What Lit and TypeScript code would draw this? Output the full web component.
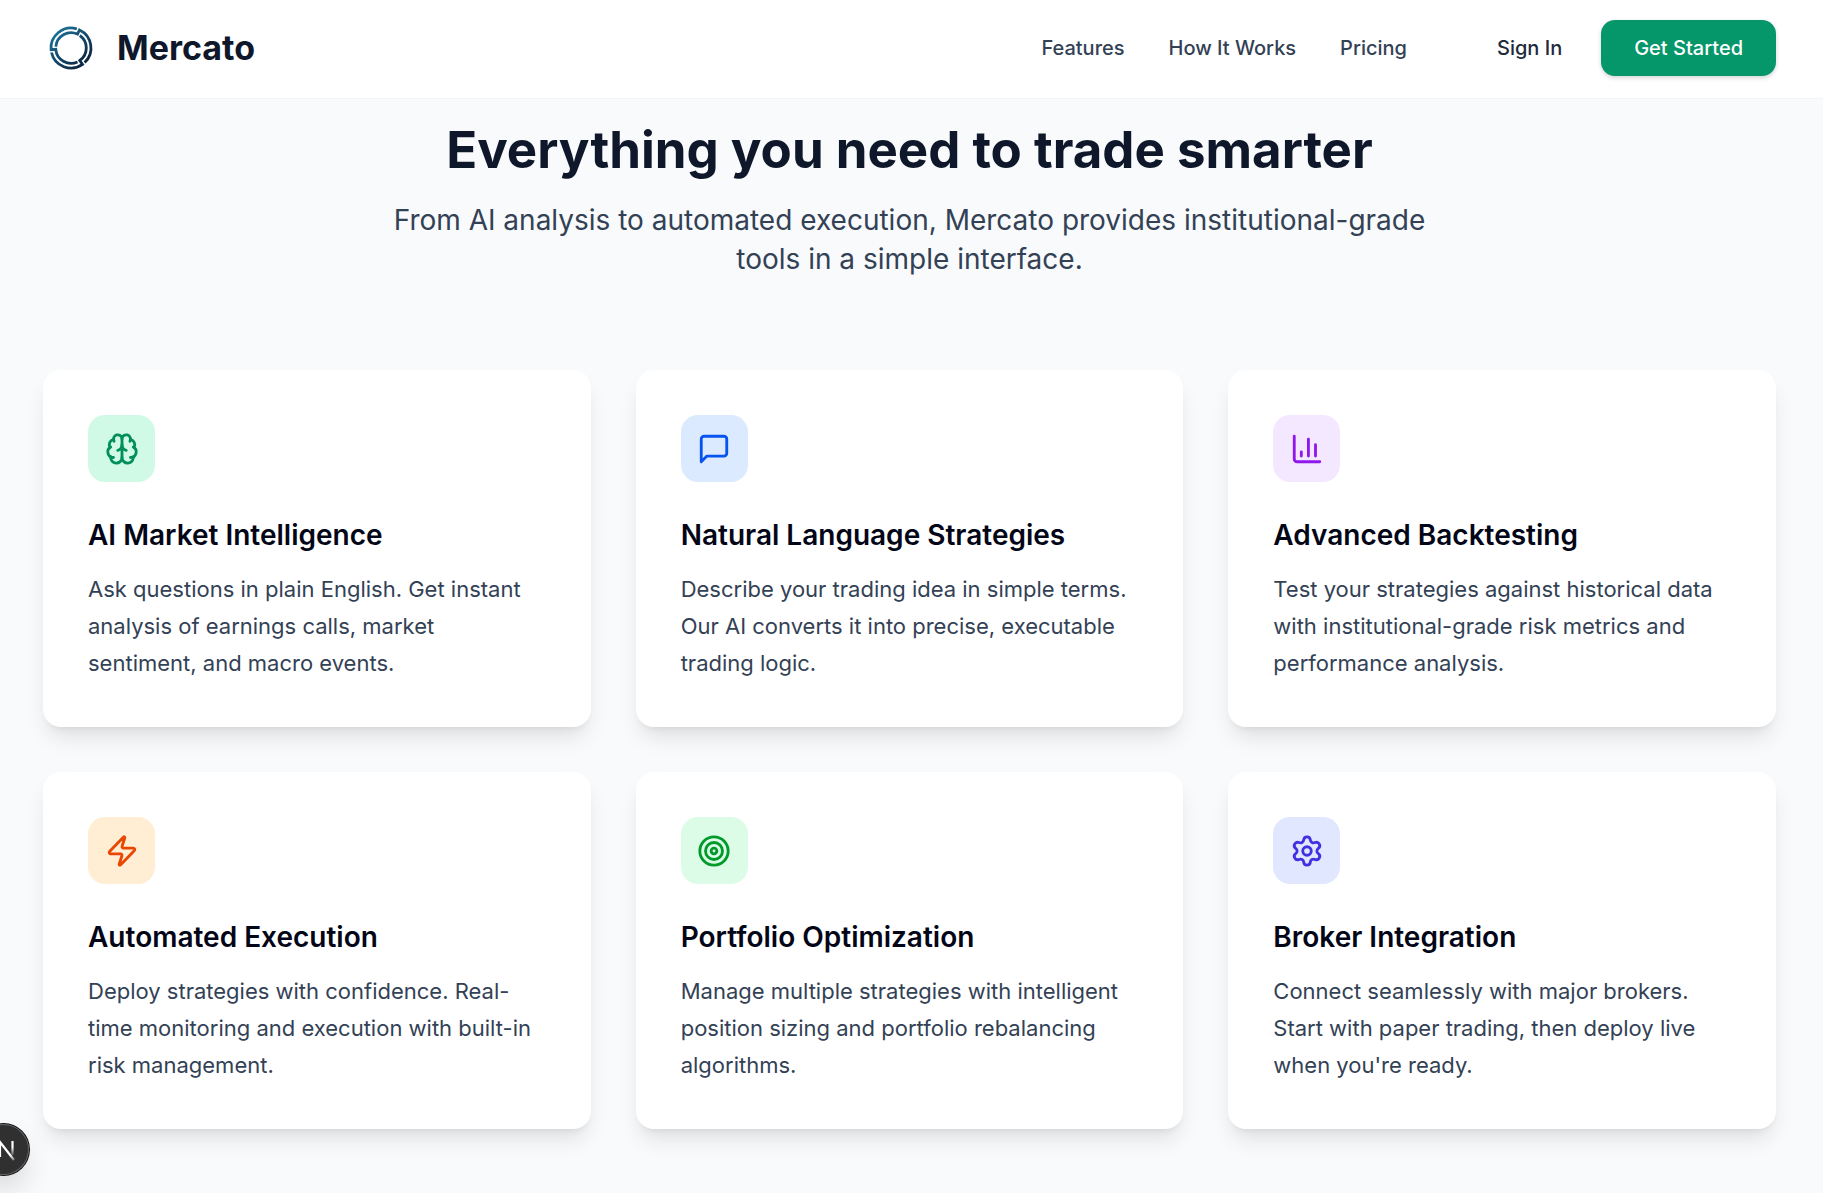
import { LitElement, html, css, svg } from "lit";
import { customElement } from "lit/decorators.js";

const icons = {
  brain: svg`<path d="M12 18V5"/><path d="M15 13a4.17 4.17 0 0 1-3-4 4.17 4.17 0 0 1-3 4"/><path d="M17.598 6.5A3 3 0 1 0 12 5a3 3 0 1 0-5.598 1.5"/><path d="M17.997 5.125a4 4 0 0 1 2.526 5.77"/><path d="M18 18a4 4 0 0 0 2-7.464"/><path d="M19.967 17.483A4 4 0 1 1 12 18a4 4 0 1 1-7.967-.517"/><path d="M6 18a4 4 0 0 1-2-7.464"/><path d="M6.003 5.125a4 4 0 0 0-2.526 5.77"/>`,
  message: svg`<path d="M21 15a2 2 0 0 1-2 2H7l-4 4V5a2 2 0 0 1 2-2h14a2 2 0 0 1 2 2z"/>`,
  chart: svg`<path d="M3 3v16a2 2 0 0 0 2 2h16"/><path d="M18 17V9"/><path d="M13 17V5"/><path d="M8 17v-3"/>`,
  zap: svg`<path d="M4 14a1 1 0 0 1-.78-1.63l9.9-10.2a.5.5 0 0 1 .86.46l-1.92 6.02A1 1 0 0 0 13 10h7a1 1 0 0 1 .78 1.63l-9.9 10.2a.5.5 0 0 1-.86-.46l1.92-6.02A1 1 0 0 0 11 14z"/>`,
  target: svg`<circle cx="12" cy="12" r="10"/><circle cx="12" cy="12" r="6"/><circle cx="12" cy="12" r="2"/>`,
  gear: svg`<path d="M9.671 4.136a2.34 2.34 0 0 1 4.659 0 2.34 2.34 0 0 0 3.319 1.915 2.34 2.34 0 0 1 2.33 4.033 2.34 2.34 0 0 0 0 3.831 2.34 2.34 0 0 1-2.33 4.033 2.34 2.34 0 0 0-3.319 1.915 2.34 2.34 0 0 1-4.659 0 2.34 2.34 0 0 0-3.32-1.915 2.34 2.34 0 0 1-2.33-4.033 2.34 2.34 0 0 0 0-3.831A2.34 2.34 0 0 1 6.35 6.051a2.34 2.34 0 0 0 3.319-1.915"/><circle cx="12" cy="12" r="3"/>`,
};

const features = [
  { tone: "emerald", icon: icons.brain, title: "AI Market Intelligence", text: "Ask questions in plain English. Get instant analysis of earnings calls, market sentiment, and macro events." },
  { tone: "blue", icon: icons.message, title: "Natural Language Strategies", text: "Describe your trading idea in simple terms. Our AI converts it into precise, executable trading logic." },
  { tone: "purple", icon: icons.chart, title: "Advanced Backtesting", text: "Test your strategies against historical data with institutional-grade risk metrics and performance analysis." },
  { tone: "orange", icon: icons.zap, title: "Automated Execution", text: "Deploy strategies with confidence. Real-time monitoring and execution with built-in risk management." },
  { tone: "green", icon: icons.target, title: "Portfolio Optimization", text: "Manage multiple strategies with intelligent position sizing and portfolio rebalancing algorithms." },
  { tone: "indigo", icon: icons.gear, title: "Broker Integration", text: "Connect seamlessly with major brokers. Start with paper trading, then deploy live when you're ready." },
];

@customElement("app-root")
export class AppRoot extends LitElement {
  static styles = css`
    :host {
      display: block;
      min-height: 100vh;
      background: #f8fafc;
      font-family: Inter, "Liberation Sans", sans-serif;
      color: #0f172a;
    }
    .bar {
      display: flex;
      align-items: center;
      justify-content: space-between;
      padding: 20px 47px 22px 43px;
      border-bottom: 1px solid #f1f5f9;
      background: #fff;
    }
    .brand {
      display: flex;
      align-items: center;
      gap: 18px;
      color: #0f172a;
      font-size: 34px;
      font-weight: 700;
      line-height: 40px;
      text-decoration: none;
    }
    .logo { width: 56px; height: 56px; }
    .menu {
      display: flex;
      align-items: center;
      font-size: 20px;
      font-weight: 500;
      line-height: 28px;
    }
    .links { display: flex; gap: 44px; }
    .links a { color: #334155; text-decoration: none; }
    .signin { margin: 0 39px 0 90px; color: #1e293b; text-decoration: none; }
    .cta {
      padding: 14px 33px;
      border: 0;
      border-radius: 14px;
      background: #059669;
      color: #fff;
      font: inherit;
      box-shadow: 0 1px 4px rgba(0, 0, 0, 0.1), 0 3px 4px rgba(0, 0, 0, 0.08);
    }
    .features { padding: 21px 47px 64px 43px; }
    .intro { max-width: 1075px; margin: 0 auto 91px; text-align: center; }
    .heading { margin: 0 0 21px; font-size: 51px; font-weight: 700; line-height: 60px; }
    .lead { margin: 0; color: #334155; font-size: 28px; line-height: 39px; }
    .grid { display: grid; grid-template-columns: repeat(3, 1fr); gap: 45px; }
    .card {
      padding: 45px;
      border-radius: 18px;
      background: #fff;
      box-shadow: 0 14px 21px -4px rgba(0, 0, 0, 0.1), 0 6px 8px -6px rgba(0, 0, 0, 0.1);
    }
    .tile {
      display: grid;
      place-items: center;
      width: 67px;
      height: 67px;
      margin-bottom: 34px;
      border-radius: 17px;
    }
    .glyph {
      width: 34px;
      height: 34px;
      fill: none;
      stroke: currentColor;
      stroke-width: 2;
      stroke-linecap: round;
      stroke-linejoin: round;
    }
    .title { margin: 0 0 16px; color: #020617; font-size: 28px; font-weight: 600; line-height: 39px; }
    .text { margin: 0; color: #334155; font-size: 22px; line-height: 37px; }
    .emerald { background: #d0fae5; color: #008f5c; }
    .blue { background: #dbeafe; color: #0653f0; }
    .purple { background: #f3e8ff; color: #9018ea; }
    .orange { background: #ffedd4; color: #ea4600; }
    .green { background: #dcfce7; color: #009a2a; }
    .indigo { background: #e0e7ff; color: #4030e2; }
    .dev {
      position: fixed;
      left: -22px;
      bottom: 18px;
      width: 51px;
      height: 51px;
      padding: 0;
      border: 0;
      border-radius: 50%;
      background: #303030;
      box-shadow: 0 0 0 1px #111, inset 0 0 0 1px #666, 0 16px 32px -8px rgba(0, 0, 0, 0.24);
    }
    .dev svg { display: block; width: 51px; height: 51px; }
  `;

  render() {
    return html`
      <header class="bar">
        <a class="brand" href="#">
          <svg class="logo" viewBox="-28 -28 56 56" fill="none" stroke="url(#ring)" stroke-width="2.8" aria-hidden="true">
            <defs>
              <linearGradient id="ring" gradientUnits="userSpaceOnUse" x1="-15" y1="-18" x2="13" y2="16">
                <stop offset="0" stop-color="#1b7299" /><stop offset="1" stop-color="#0b2440" />
              </linearGradient>
            </defs>
            <path d="M5.8 -19.1A20 20 0 0 0 -19.9 1.7L-15.2 1.3A15.3 15.3 0 0 0 6.5 13.9" />
            <path d="M13.6 14.6A20 20 0 0 0 8.5 -18.1L6.5 -13.9A15.3 15.3 0 0 0 -15.2 -1.3" />
            <path d="M-19.5 4.5A20 20 0 0 0 11.5 16.4L8.8 12.5A15.3 15.3 0 0 0 8.8 -12.5" />
          </svg>
          Mercato
        </a>
        <nav class="menu">
          <div class="links">
            <a href="#features">Features</a>
            <a href="#how">How It Works</a>
            <a href="#pricing">Pricing</a>
          </div>
          <a class="signin" href="#signin">Sign In</a>
          <button class="cta">Get Started</button>
        </nav>
      </header>
      <main class="features" id="features">
        <div class="intro">
          <h2 class="heading">Everything you need to trade smarter</h2>
          <p class="lead">From AI analysis to automated execution, Mercato provides institutional-grade tools in a simple interface.</p>
        </div>
        <div class="grid">
          ${features.map(
            (f) => html`<article class="card">
              <div class="tile ${f.tone}"><svg class="glyph" viewBox="0 0 24 24" aria-hidden="true">${f.icon}</svg></div>
              <h3 class="title">${f.title}</h3>
              <p class="text">${f.text}</p>
            </article>`,
          )}
        </div>
      </main>
      <button class="dev" aria-label="Developer tools">
        <svg viewBox="0 0 51 51" fill="none" stroke-width="2.2" aria-hidden="true">
          <defs>
            <linearGradient id="fade" gradientUnits="userSpaceOnUse" x1="0" y1="17" x2="0" y2="32">
              <stop offset="0.4" stop-color="#fff" /><stop offset="1" stop-color="#fff" stop-opacity="0.1" />
            </linearGradient>
            <linearGradient id="slant" gradientUnits="userSpaceOnUse" x1="22" y1="18" x2="36" y2="37">
              <stop offset="0.7" stop-color="#fff" /><stop offset="1" stop-color="#fff" stop-opacity="0.3" />
            </linearGradient>
          </defs>
          <path d="M22 33V18L36 36" stroke="url(#slant)" />
          <path d="M34.5 17V31" stroke="url(#fade)" />
        </svg>
      </button>
    `;
  }
}
